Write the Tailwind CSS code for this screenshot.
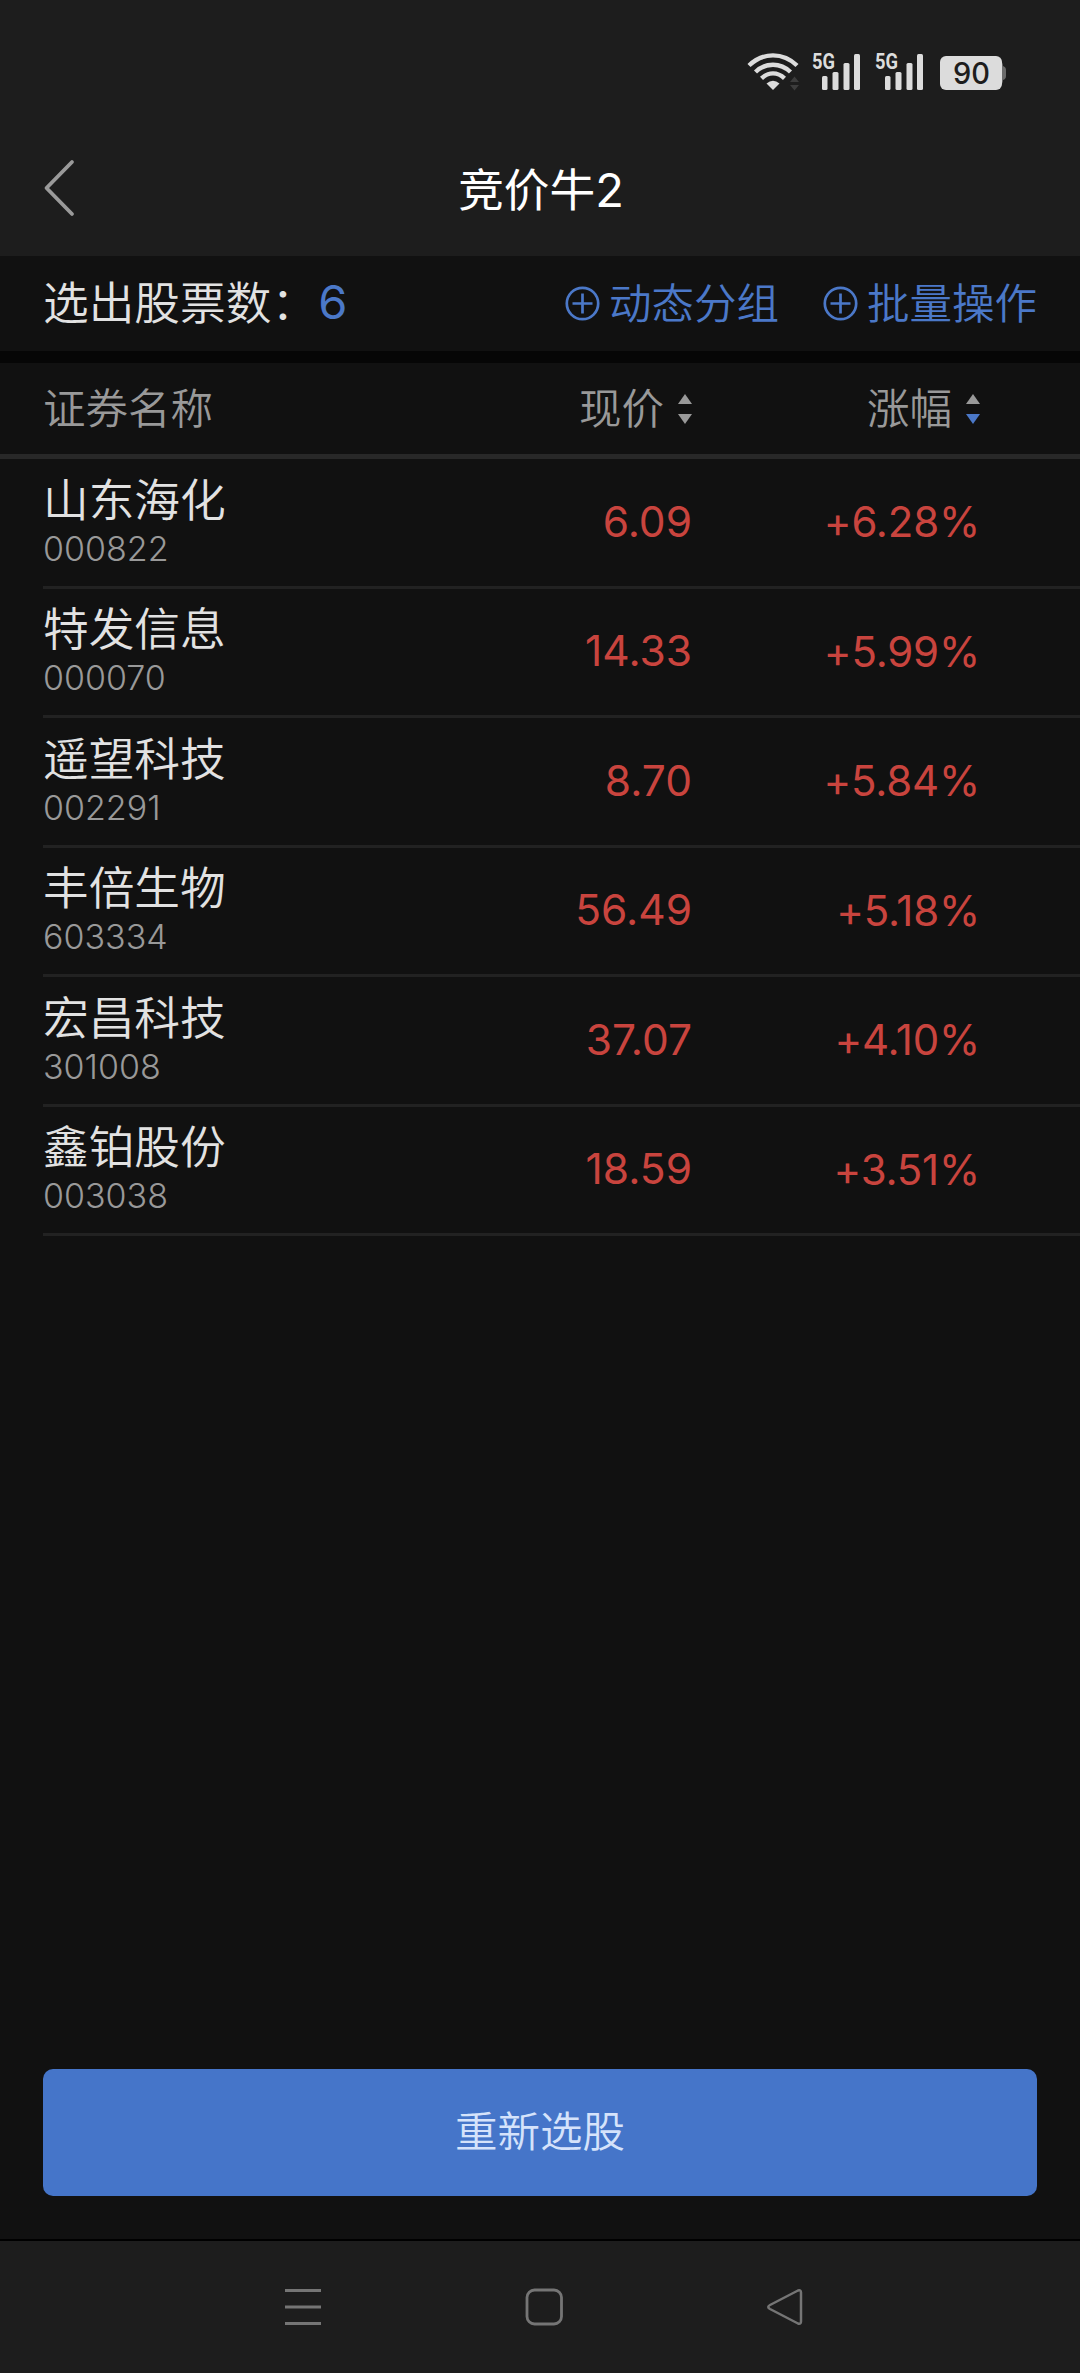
<!DOCTYPE html>
<html lang="zh-CN">
  <head>
    <meta charset="UTF-8" />
    <meta name="viewport" content="width=device-width, initial-scale=1.0" />
    <title>竞价牛2</title>
    <script src="https://cdn.jsdelivr.net/npm/@tailwindcss/browser@4"></script>
  </head>
  <body class="bg-[#111111]">
    <div
      class="flex h-[2373px] w-[1080px] flex-col overflow-hidden bg-[#111111] font-['Inter','Noto_Sans_CJK_SC',sans-serif] font-[350] whitespace-nowrap text-[#e2e2e2]"
    >
      <!-- Status bar + title -->
      <header class="h-[256px] shrink-0 bg-[#1d1d1d]">
        <div class="flex h-[124px] items-start justify-end pt-[52px] pr-[73px]">
          <!-- Wifi -->
          <svg class="h-10 w-[54px]" viewBox="0 0 54 40" fill="none">
            <g stroke="#dcdcdc" stroke-width="4.4">
              <path d="M2 13.5C16 0 36 0 50 13.5" />
              <path d="M8.5 20C18.5 10.3 33.5 10.3 43.5 20" />
              <path d="M14.5 26.3C21.5 19.7 30.5 19.7 37.5 26.3" />
            </g>
            <path d="M26 38l-6.5-6.5q6.5-5.5 13 0z" fill="#dcdcdc" />
            <path d="M43 30l4.5-5.5 4.5 5.5zM43 33h9l-4.5 5.5z" fill="#3c3c3c" />
          </svg>
          <!-- Signal, SIM 1 -->
          <svg class="ml-[11px] h-10 w-[49px] overflow-visible" viewBox="0 0 49 40">
            <text x="0" y="17" font-family="Roboto, sans-serif" font-size="22" font-weight="700" fill="#dcdcdc" textLength="23" lengthAdjust="spacingAndGlyphs">5G</text>
            <g fill="#dcdcdc">
              <rect x="10" y="24" width="5.5" height="14" rx="1.5" />
              <rect x="20.5" y="20" width="6" height="18" rx="1.5" />
              <rect x="31.5" y="11" width="6" height="27" rx="1.5" />
              <rect x="42" y="2" width="6" height="36" rx="1.5" />
            </g>
          </svg>
          <!-- Signal, SIM 2 -->
          <svg class="ml-[14px] h-10 w-[49px] overflow-visible" viewBox="0 0 49 40">
            <text x="0" y="17" font-family="Roboto, sans-serif" font-size="22" font-weight="700" fill="#dcdcdc" textLength="23" lengthAdjust="spacingAndGlyphs">5G</text>
            <g fill="#dcdcdc">
              <rect x="10" y="24" width="5.5" height="14" rx="1.5" />
              <rect x="20.5" y="20" width="6" height="18" rx="1.5" />
              <rect x="31.5" y="11" width="6" height="27" rx="1.5" />
              <rect x="42" y="2" width="6" height="36" rx="1.5" />
            </g>
          </svg>
          <!-- Battery -->
          <svg class="ml-[16px] h-10 w-[67px]" viewBox="0 0 67 40">
            <path d="M60 9q3 1 3 5 3 1 3 4v6q0 3-3 4 0 4-3 5z" fill="#6b6b6b" />
            <rect x="0" y="4" width="62" height="34" rx="6" fill="#dcdcdc" />
            <text x="13" y="32" font-family="Inter, sans-serif" font-size="30" font-weight="500" fill="#1d1d1d" textLength="37" lengthAdjust="spacingAndGlyphs">90</text>
          </svg>
        </div>
        <div class="grid h-[132px] grid-cols-[1fr_auto_1fr] items-center px-[43px]">
          <svg class="mb-[5px] h-[58px] w-8" viewBox="0 0 32 58" fill="none" stroke="#9a9a9a" stroke-width="3.8" stroke-linecap="round" stroke-linejoin="round">
            <path d="M29 3L3.5 29 29 55" />
          </svg>
          <h1 class="pl-0.5 text-[45.7px] leading-[60px] font-normal text-white">竞价牛<span class="text-[47px]">2</span></h1>
        </div>
      </header>

      <!-- Result count + actions -->
      <section class="flex h-[95px] shrink-0 items-center pr-[43px] pl-[43px]">
        <span class="text-[45.7px] leading-[60px]">选出股票数：</span>
        <span class="pb-[3px] pl-px text-[47px] leading-[60px] font-normal text-[#4b78c8]">6</span>
        <div class="ml-auto flex gap-[44px] text-[42.5px] leading-[60px] text-[#4b78c8]">
          <div class="flex items-center gap-[9px]">
            <svg class="h-[35px] w-[35px]" viewBox="0 0 35 35" fill="none" stroke="currentColor" stroke-width="2.7">
              <circle cx="17.5" cy="17.5" r="15.7" />
              <path d="M7.5 17.5h20M17.5 7.5v20" />
            </svg>
            <span>动态分组</span>
          </div>
          <div class="flex items-center gap-[9px]">
            <svg class="h-[35px] w-[35px]" viewBox="0 0 35 35" fill="none" stroke="currentColor" stroke-width="2.7">
              <circle cx="17.5" cy="17.5" r="15.7" />
              <path d="M7.5 17.5h20M17.5 7.5v20" />
            </svg>
            <span>批量操作</span>
          </div>
        </div>
      </section>
      <div class="h-3 shrink-0 bg-[#060606]"></div>

      <!-- Table header -->
      <div class="grid h-[96px] shrink-0 grid-cols-[349px_300px_288px] items-center border-b-5 border-[#282828] pl-[43px] text-[42.5px] leading-[60px] text-[#999999]">
        <span>证券名称</span>
        <div class="flex items-center justify-end gap-[14px]">
          <span>现价</span>
          <svg class="h-[30px] w-[14px]" viewBox="0 0 14 30">
            <path d="M0 10L7 0l7 10z" fill="#999999" />
            <path d="M0 20h14L7 30z" fill="#999999" />
          </svg>
        </div>
        <div class="flex items-center justify-end gap-[14px]">
          <span>涨幅</span>
          <svg class="h-[30px] w-[14px]" viewBox="0 0 14 30">
            <path d="M0 10L7 0l7 10z" fill="#999999" />
            <path d="M0 20h14L7 30z" fill="#4b78c8" />
          </svg>
        </div>
      </div>

      <!-- Stock rows -->
      <main class="grow pl-[43px]">
        <div class="grid h-[129.5px] grid-cols-[349px_300px_288px] items-center border-b-3 border-[#222222] pb-px">
          <div>
            <div class="text-[45.7px] leading-[54px]">山东海化</div>
            <div class="text-[34px] leading-[42px] text-[#999999]">000822</div>
          </div>
          <div class="text-right text-[42.5px] font-normal text-[#c9443e]">6.09</div>
          <div class="text-right text-[42px] font-normal tracking-[-0.2px] text-[#c9443e]">+6.28%</div>
        </div>
        <div class="grid h-[129.5px] grid-cols-[349px_300px_288px] items-center border-b-3 border-[#222222] pb-px">
          <div>
            <div class="text-[45.7px] leading-[54px]">特发信息</div>
            <div class="text-[34px] leading-[42px] text-[#999999]">000070</div>
          </div>
          <div class="text-right text-[42.5px] font-normal text-[#c9443e]">14.33</div>
          <div class="text-right text-[42px] font-normal tracking-[-0.2px] text-[#c9443e]">+5.99%</div>
        </div>
        <div class="grid h-[129.5px] grid-cols-[349px_300px_288px] items-center border-b-3 border-[#222222] pb-px">
          <div>
            <div class="text-[45.7px] leading-[54px]">遥望科技</div>
            <div class="text-[34px] leading-[42px] text-[#999999]">002291</div>
          </div>
          <div class="text-right text-[42.5px] font-normal text-[#c9443e]">8.70</div>
          <div class="text-right text-[42px] font-normal tracking-[-0.2px] text-[#c9443e]">+5.84%</div>
        </div>
        <div class="grid h-[129.5px] grid-cols-[349px_300px_288px] items-center border-b-3 border-[#222222] pb-px">
          <div>
            <div class="text-[45.7px] leading-[54px]">丰倍生物</div>
            <div class="text-[34px] leading-[42px] text-[#999999]">603334</div>
          </div>
          <div class="text-right text-[42.5px] font-normal text-[#c9443e]">56.49</div>
          <div class="text-right text-[42px] font-normal tracking-[-0.2px] text-[#c9443e]">+5.18%</div>
        </div>
        <div class="grid h-[129.5px] grid-cols-[349px_300px_288px] items-center border-b-3 border-[#222222] pb-px">
          <div>
            <div class="text-[45.7px] leading-[54px]">宏昌科技</div>
            <div class="text-[34px] leading-[42px] text-[#999999]">301008</div>
          </div>
          <div class="text-right text-[42.5px] font-normal text-[#c9443e]">37.07</div>
          <div class="text-right text-[42px] font-normal tracking-[-0.2px] text-[#c9443e]">+4.10%</div>
        </div>
        <div class="grid h-[129.5px] grid-cols-[349px_300px_288px] items-center border-b-3 border-[#222222] pb-px">
          <div>
            <div class="text-[45.7px] leading-[54px]">鑫铂股份</div>
            <div class="text-[34px] leading-[42px] text-[#999999]">003038</div>
          </div>
          <div class="text-right text-[42.5px] font-normal text-[#c9443e]">18.59</div>
          <div class="text-right text-[42px] font-normal tracking-[-0.2px] text-[#c9443e]">+3.51%</div>
        </div>
      </main>

      <!-- Primary action -->
      <div class="shrink-0 px-[43px] pb-[43px]">
        <button class="block h-[127px] w-full rounded-[10px] bg-[#4575c9] pb-px text-[42.5px] text-[#d5e3fb]">重新选股</button>
      </div>

      <!-- System navigation -->
      <nav class="flex h-[134px] shrink-0 gap-[203px] border-t-2 border-black bg-[#1d1d1d] pt-[47px] pl-[284px] text-[#757575]">
        <svg class="h-[38px] w-[38px]" viewBox="0 0 38 38" fill="none" stroke="currentColor" stroke-width="3">
          <path d="M1 2.5h36M1 19h36M1 35.5h36" />
        </svg>
        <svg class="h-[38px] w-[38px]" viewBox="0 0 38 38" fill="none" stroke="currentColor" stroke-width="2.8">
          <rect x="2" y="2" width="34.5" height="34" rx="7.5" />
        </svg>
        <svg class="h-[38px] w-[38px]" viewBox="0 0 38 38" fill="none" stroke="currentColor" stroke-width="2.5" stroke-linejoin="round">
          <path d="M32 2.5L4 17q-3.5 2 0 4l28 14.5q3 1 3-2v-29q0-3-3-2z" />
        </svg>
      </nav>
    </div>
  </body>
</html>
